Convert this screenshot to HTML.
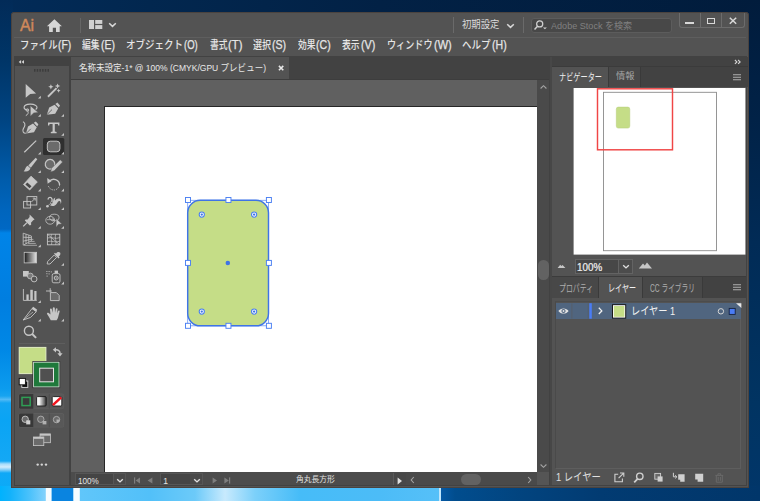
<!DOCTYPE html>
<html lang="ja">
<head>
<meta charset="utf-8">
<title>Adobe Illustrator</title>
<style>
*{margin:0;padding:0;box-sizing:border-box}
html,body{width:760px;height:501px;overflow:hidden}
body{position:relative;font-family:"Liberation Sans","Noto Sans CJK JP",sans-serif;color:#dcdcdc;font-size:12px;background:#06224f}
.abs,.abs *{position:absolute}
#desk{left:0;top:0;width:760px;height:501px}
#win{left:11.2px;top:12.2px;width:737.7px;height:475.8px;background:#535353;border-radius:3.5px 3.5px 0 0;box-shadow:inset 0 0 0 0.8px #483f3a;overflow:hidden}
.t{white-space:nowrap;line-height:1;transform-origin:0 0}
.dk{background:#424242}
.m{top:39.8px;font-size:11px;color:#e6e6e6;font-weight:500}
.ml{top:39.1px;font-size:12px;color:#e6e6e6;-webkit-text-stroke:0.25px #e6e6e6}
</style>
</head>
<body>
<!-- DESKTOP -->
<svg id="desk" class="abs" width="760" height="501" viewBox="0 0 760 501">
<defs>
<linearGradient id="gl" x1="0" y1="0" x2="0" y2="1"><stop offset="0.0000" stop-color="#022b58"/><stop offset="0.1198" stop-color="#003567"/><stop offset="0.2395" stop-color="#004482"/><stop offset="0.3593" stop-color="#005cab"/><stop offset="0.4192" stop-color="#0065bd"/><stop offset="0.4571" stop-color="#0068c4"/><stop offset="0.4651" stop-color="#0084e8"/><stop offset="0.5988" stop-color="#007ee0"/><stop offset="0.6986" stop-color="#0088e6"/><stop offset="0.7764" stop-color="#0c9cee"/><stop offset="0.7904" stop-color="#18a4f0"/><stop offset="0.7974" stop-color="#52baf5"/><stop offset="0.8044" stop-color="#12a4f2"/><stop offset="0.8383" stop-color="#0aa4f4"/><stop offset="0.9202" stop-color="#14a8f5"/><stop offset="0.9261" stop-color="#a6dcfb"/><stop offset="0.9321" stop-color="#d2ecfd"/><stop offset="0.9381" stop-color="#7cccf9"/><stop offset="0.9441" stop-color="#10a8f6"/><stop offset="1.0000" stop-color="#08acf8"/></linearGradient>
<linearGradient id="gt" x1="0" y1="0" x2="1" y2="0"><stop offset="0.0000" stop-color="#022b58"/><stop offset="0.1974" stop-color="#02274f"/><stop offset="0.5000" stop-color="#022145"/><stop offset="1.0000" stop-color="#011c3c"/></linearGradient>
<linearGradient id="gr" x1="0" y1="0" x2="0" y2="1"><stop offset="0.0000" stop-color="#011c3c"/><stop offset="0.2395" stop-color="#012247"/><stop offset="0.4850" stop-color="#012b56"/><stop offset="0.8044" stop-color="#013462"/><stop offset="1.0000" stop-color="#01366a"/></linearGradient>
<linearGradient id="gb" x1="0" y1="0" x2="1" y2="0"><stop offset="0.0000" stop-color="#00b2fe"/><stop offset="0.0132" stop-color="#12b2fb"/><stop offset="0.0395" stop-color="#4cc2fb"/><stop offset="0.0603" stop-color="#84d2fc"/><stop offset="0.1053" stop-color="#60c6fa"/><stop offset="0.1974" stop-color="#52c0f9"/><stop offset="0.2566" stop-color="#6ccaf9"/><stop offset="0.2961" stop-color="#c8eafd"/><stop offset="0.3355" stop-color="#7cd0fa"/><stop offset="0.3947" stop-color="#46bcf8"/><stop offset="0.5000" stop-color="#4cbcf7"/><stop offset="0.5774" stop-color="#56c0f8"/><stop offset="0.5776" stop-color="#c0e6fc"/><stop offset="0.5797" stop-color="#c0e6fc"/><stop offset="0.5800" stop-color="#0458a4"/><stop offset="0.5987" stop-color="#014d8e"/><stop offset="0.6842" stop-color="#02447f"/><stop offset="0.7895" stop-color="#023b72"/><stop offset="1.0000" stop-color="#01366a"/></linearGradient>
</defs>
<rect x="0" y="0" width="760" height="14" fill="url(#gt)"/>
<rect x="747" y="0" width="13" height="501" fill="url(#gr)"/>
<rect x="0" y="0" width="13" height="501" fill="url(#gl)"/>
<rect x="0" y="486" width="760" height="15" fill="url(#gb)"/>
<rect x="45.800" y="486" width="5.900" height="15" fill="#f6fcff"/>
<rect x="51.700" y="486" width="21.700" height="15" fill="#0a84e0"/>
<rect x="73.400" y="486" width="6.400" height="15" fill="#f6fcff"/>
</svg>

<!-- WINDOW -->
<div id="win" class="abs"></div>
<div id="ui" class="abs" style="left:0;top:0;width:760px;height:501px">
<!-- TITLEBAR -->
<div id="titlebar" style="left:11.2px;top:12.2px;width:737.7px;height:25.8px"></div>
<div id="ai" class="t" style="left:20.3px;top:16.6px;font-size:17.2px;color:#cf895b;-webkit-text-stroke:0.45px #cf895b;transform:scaleX(0.9218)">Ai</div>
<svg style="left:46px;top:19px" width="17" height="14" viewBox="0 0 17 14"><path d="M8.4 0.3 L15.9 7.2 H13.7 V13 H10 V8.8 H6.8 V13 H3.1 V7.2 H0.9 Z" fill="#d6d6d6"/></svg>
<div style="left:79.5px;top:18px;width:1px;height:15px;background:#666"></div>
<svg style="left:89px;top:19.8px" width="14" height="10" viewBox="0 0 14 10"><rect x="0" y="0" width="5" height="9" fill="#d0d0d0"/><rect x="6.2" y="0" width="7.1" height="3.9" fill="#d0d0d0"/><rect x="6.2" y="5.1" width="7.1" height="3.9" fill="#d0d0d0"/></svg>
<svg style="left:107.6px;top:21.6px" width="9" height="6" viewBox="0 0 9 6"><path d="M1.2 1.2 L4.5 4.4 L7.8 1.2" fill="none" stroke="#d8d8d8" stroke-width="1.5"/></svg>
<div style="left:453px;top:17px;width:1px;height:16px;background:#6a6a6a"></div>
<div id="wsname" class="t" style="left:461.5px;top:20.1px;font-size:10px;color:#dcdcdc;transform:scaleX(0.9375)">初期設定</div>
<svg style="left:506px;top:23px" width="9" height="6" viewBox="0 0 9 6"><path d="M1.2 1.2 L4.5 4.4 L7.8 1.2" fill="none" stroke="#d8d8d8" stroke-width="1.5"/></svg>
<div style="left:523px;top:17px;width:1px;height:16px;background:#6a6a6a"></div>
<div style="left:530.8px;top:18.300px;width:141.200px;height:15px;background:#484848;border:0.8px solid #5c5c5c;border-radius:3px"></div>
<svg style="left:534px;top:20px" width="14" height="12" viewBox="0 0 14 12"><circle cx="5.700" cy="3.900" r="3.050" fill="none" stroke="#d0d0d0" stroke-width="1.250"/><path d="M3.500 6.300 L0.500 9.500" stroke="#d0d0d0" stroke-width="1.500" fill="none"/><path d="M8.900 7.400 H12.900 L10.900 9.300 Z" fill="#d0d0d0"/></svg>
<div id="stock" class="t" style="left:550.5px;top:21.4px;font-size:9.4px;color:#808080;transform:scaleX(0.9679)">Adobe Stock を検索</div>
<div style="left:678.6px;top:12.6px;width:66px;height:15px;border:1px solid #6c6c6c;border-top:none;border-radius:0 0 3px 3px"></div>
<div style="left:700.2px;top:12.6px;width:1px;height:14.4px;background:#6c6c6c"></div>
<div style="left:721.2px;top:12.6px;width:1px;height:14.4px;background:#6c6c6c"></div>
<div style="left:685.4px;top:22px;width:8.2px;height:1.8px;background:#d8d8d8"></div>
<div style="left:707px;top:18px;width:8.2px;height:6.2px;border:1.4px solid #d8d8d8;border-top-width:1.8px"></div>
<svg style="left:728px;top:16px" width="10" height="9" viewBox="0 0 10 9"><path d="M1.800 1.800 L8.2 7.800 M8.2 1.8 L1.8 7.8" stroke="#d8d8d8" stroke-width="1.5" fill="none"/></svg>
<div style="left:14px;top:37px;width:732px;height:1px;background:#5e5e5e"></div>
<!-- MENUBAR -->
<div id="menubar" style="left:11.2px;top:38px;width:737.7px;height:18px"></div>
<div class="t m" id="m1a" style="left:19.5px;transform:scaleX(0.8523)">ファイル</div><div class="t ml" id="m1b" style="left:58.3px;transform:scaleX(0.8579)">(F)</div>
<div class="t m" id="m2a" style="left:82px;transform:scaleX(0.7955)">編集</div><div class="t ml" id="m2b" style="left:100.8px;transform:scaleX(0.8688)">(E)</div>
<div class="t m" id="m3a" style="left:125.5px;transform:scaleX(0.8636)">オブジェクト</div><div class="t ml" id="m3b" style="left:184.05px;transform:scaleX(0.7877)">(O)</div>
<div class="t m" id="m4a" style="left:209.5px;transform:scaleX(0.7955)">書式</div><div class="t ml" id="m4b" style="left:228.3px;transform:scaleX(0.9394)">(T)</div>
<div class="t m" id="m5a" style="left:253.25px;transform:scaleX(0.8182)">選択</div><div class="t ml" id="m5b" style="left:272.3px;transform:scaleX(0.8844)">(S)</div>
<div class="t m" id="m6a" style="left:297.5px;transform:scaleX(0.7955)">効果</div><div class="t ml" id="m6b" style="left:316.3px;transform:scaleX(0.8787)">(C)</div>
<div class="t m" id="m7a" style="left:342px;transform:scaleX(0.7955)">表示</div><div class="t ml" id="m7b" style="left:360.8px;transform:scaleX(0.9000)">(V)</div>
<div class="t m" id="m8a" style="left:387px;transform:scaleX(0.8273)">ウィンドウ</div><div class="t ml" id="m8b" style="left:433.8px;transform:scaleX(0.9132)">(W)</div>
<div class="t m" id="m9a" style="left:462px;transform:scaleX(0.8636)">ヘルプ</div><div class="t ml" id="m9b" style="left:491.8px;transform:scaleX(0.8787)">(H)</div>
<!-- FRAME LINES -->
<div style="left:14.1px;top:56.2px;width:732.5px;height:429.8px;background:#424242"></div>
<!-- TOOLBAR -->
<div id="tools" style="left:14.9px;top:57px;width:53.9px;height:427.8px;background:#535353"></div>
<div class="dk" style="left:14.9px;top:57px;width:53.9px;height:9.4px"></div>
<!--TOOLSVG-->
<svg id="toolsvg" style="left:14px;top:57px" width="55" height="428" viewBox="14 57 55 428">
<g fill="#c6c6c6" stroke="none">
<!-- collapse arrows -->
<path d="M21.100 60.100 V63.700 L18.700 61.900 Z M24 60.100 V63.700 L21.600 61.900 Z" fill="#d4d4d4"/>
<!-- gripper -->
<g fill="#3c3c3c"><rect x="34.0" y="69" width="1.5" height="2.700"/><rect x="36.7" y="69" width="1.5" height="2.700"/><rect x="39.4" y="69" width="1.5" height="2.700"/><rect x="42.1" y="69" width="1.5" height="2.700"/><rect x="44.8" y="69" width="1.5" height="2.700"/><rect x="47.5" y="69" width="1.5" height="2.700"/></g>
<!-- flyout triangles -->
<g id="fly">
<path d="M40.8 95.8 V98.6 H38 Z"/>
<path d="M40.8 114 V116.8 H38 Z"/><path d="M64 114 V116.8 H61.2 Z"/>
<path d="M64 133 V135.8 H61.2 Z"/>
<path d="M40.8 151.8 V154.6 H38 Z"/><path d="M64 151.8 V154.6 H61.2 Z"/>
<path d="M40.8 170.2 V173 H38 Z"/><path d="M64 170.2 V173 H61.2 Z"/>
<path d="M40.8 188.6 V191.4 H38 Z"/><path d="M64 188.6 V191.4 H61.2 Z"/>
<path d="M40.8 207.3 V210.1 H38 Z"/><path d="M64 207.3 V210.1 H61.2 Z"/>
<path d="M40.8 225.9 V228.7 H38 Z"/><path d="M64 225.9 V228.7 H61.2 Z"/>
<path d="M40.8 244.5 V247.3 H38 Z"/>
<path d="M64 263 V265.8 H61.2 Z"/>
<path d="M64 281.6 V284.4 H61.2 Z"/>
<path d="M40.8 300.2 V303 H38 Z"/>
<path d="M40.8 318.8 V321.6 H38 Z"/><path d="M64 318.8 V321.6 H61.2 Z"/>
</g>
<!-- R1 selection -->
<path d="M25.7 83.9 L36.1 93.5 L30.2 93.9 L25.7 97.8 Z"/>
<!-- magic wand -->
<path d="M47.300 96.100 L55.900 87.500 L57.200 88.800 L48.600 97.400 Z"/>
<path d="M50.900 84.200 L51.700 86.100 L53.600 86.800 L51.700 87.500 L50.900 89.400 L50.100 87.500 L48.200 86.800 L50.100 86.100 Z"/>
<path d="M57.600 83.400 L58.400 85.300 L60.300 86 L58.400 86.700 L57.600 88.600 L56.800 86.700 L54.900 86 L56.800 85.300 Z"/>
<path d="M58.600 88.700 L59.200 90.100 L60.600 90.700 L59.200 91.300 L58.600 92.700 L58 91.300 L56.600 90.700 L58 90.100 Z"/>
<!-- R2 lasso+arrow -->
<path d="M28.4 110.3 C25.6 110 23.900 108.800 24.1 107.2 C24.400 105.200 27.2 104 30.6 104.1 C34.400 104.200 37.2 105.600 37 107.600 C36.900 108.400 36.400 109 35.600 109.500" fill="none" stroke="#c6c6c6" stroke-width="1.15"/>
<circle cx="27.4" cy="110.100" r="1.300" fill="none" stroke="#c6c6c6" stroke-width="0.9"/>
<path d="M27.900 111.300 C28.600 112.800 28 114.600 25.800 115.600" fill="none" stroke="#c6c6c6" stroke-width="1"/>
<path d="M30.300 105.700 L38.300 112.500 L33.800 112.900 L30.300 116.200 Z" stroke="#535353" stroke-width="0.5"/>
<!-- pen -->
<path d="M46.8 114.8 L49.2 107.6 L54.6 104.8 L58.2 108.6 L55.2 113.8 Z"/>
<path d="M55.4 103.9 L57.4 102.6 L60 105.4 L58.8 107.6 Z"/>
<path d="M46.9 114.7 L52 109.6" stroke="#535353" stroke-width="0.8" fill="none"/>
<!-- R3 curvature pen -->
<path d="M23 121.6 C26.4 123.6 24.6 126.6 23.4 128.6 C22 131 23.4 133.6 26.2 133.2" fill="none" stroke="#c6c6c6" stroke-width="1.1"/>
<path d="M26 133.6 L28 126.6 L33 123.6 L36.8 127.2 L34 132.2 Z"/>
<path d="M33.8 122.8 L35.8 121.4 L38.4 124.2 L37.2 126.4 Z"/>
<path d="M26.1 133.5 L30.8 128.8" stroke="#535353" stroke-width="0.8" fill="none"/>
<!-- T -->
<path d="M48 122.4 H59.4 V125.6 H58.2 L57.8 123.9 H54.8 V131.6 L56.6 132 V133.2 H50.8 V132 L52.6 131.6 V123.9 H49.6 L49.2 125.6 H48 Z"/>
<!-- R4 line -->
<path d="M24.3 152.2 L36.2 140.6" stroke="#c6c6c6" stroke-width="1.2" fill="none"/>
<!-- rounded rect selected -->
<rect x="43" y="138" width="21.3" height="17" rx="1.5" fill="#2f2f2f"/>
<rect x="47.3" y="141.2" width="12.6" height="10.6" rx="3" fill="#6b6b6b" stroke="#cfcfcf" stroke-width="0.9"/>
<path d="M64 151.8 V154.6 H61.2 Z"/>
<!-- R5 brush -->
<path d="M35.700 157.800 L37.300 159.300 L30.800 167.700 L28.300 165.500 Z"/>
<path d="M27.700 165.800 L30.400 168.300 C30 170.600 27.200 172 23.600 171.200 C25.600 170.200 25 167 27.700 165.800 Z"/>
<!-- shaper -->
<path d="M52.600 168.300 A4.800 4.800 0 1 1 54.600 165.700" fill="#6b6b6b" stroke="#c6c6c6" stroke-width="1.25"/>
<path d="M50.700 171.900 L51.500 168.200 L60.200 159.700 L62.600 162 L54.200 170.800 Z" stroke="#535353" stroke-width="0.5"/>
<!-- R6 eraser -->
<path d="M31 176.200 L37.300 181.900 L29.700 190 L23.500 184.500 Z" stroke="#c6c6c6" stroke-width="0.8" stroke-linejoin="round"/>
<path d="M25.400 184.500 L27.300 182.400 L31.500 186.200 L29.600 188.300 Z" fill="#484848"/>
<!-- rotate -->
<path d="M49.200 181.600 A5.800 5.800 0 0 1 59.600 185" fill="none" stroke="#c6c6c6" stroke-width="1.4"/>
<path d="M59.600 185 A5.800 5.800 0 0 1 48.200 185.400" fill="none" stroke="#c6c6c6" stroke-width="0.9" stroke-dasharray="1.3 1"/>
<path d="M47.200 178 L51.700 181 L47.600 183.800 Z"/>
<!-- R7 scale -->
<rect x="23.6" y="201.4" width="7" height="6.6" fill="none" stroke="#c6c6c6" stroke-width="0.9"/>
<rect x="27" y="196.6" width="9.8" height="8.4" fill="none" stroke="#c6c6c6" stroke-width="0.9"/>
<path d="M31.4 202 L35 198.4 M32.8 198.2 H35.2 V200.6" fill="none" stroke="#c6c6c6" stroke-width="0.9"/>
<!-- width tool -->
<path d="M48.200 199.700 C47.800 197.800 49.500 196.800 50.900 197.600 C52.400 198.600 52.300 200.600 51.800 202.300" fill="none" stroke="#c6c6c6" stroke-width="1.200"/>
<path d="M50 205.300 C52 206.600 55.200 206.100 56.700 203.700 C57.700 202.100 58.600 200.700 59.600 201.100 C60.600 201.500 60.800 202.900 60.600 204.300 C61.900 202 61.500 199.300 59.400 198.600 C57.700 198 56.300 199 55.300 200.400 C54.400 198.900 55 198.100 55.900 197.800 C54.400 197.500 53.400 198.800 53.200 200.400 C53 202.100 52.300 203.500 50 205.300 Z"/>
<circle cx="47.400" cy="206.200" r="1.300"/><circle cx="51.700" cy="202.500" r="1.100" fill="#535353" stroke="#c6c6c6" stroke-width="0.600"/>
<path d="M47.400 206.200 L51 203.100" stroke="#c6c6c6" stroke-width="0.600" fill="none"/>
<!-- R8 pin -->
<path d="M29.600 214.600 L34.600 219.400 L33.200 220.200 L31 222.800 L31.200 224.800 L29.800 225.400 L24.800 220.600 L25.600 219.400 L27.600 219.400 L29.600 217 Z"/>
<path d="M27 222.600 L23.200 226.400" stroke="#c6c6c6" stroke-width="1.300" fill="none"/>
<!-- shape builder -->
<ellipse cx="50.200" cy="220.300" rx="4.400" ry="3.900" fill="none" stroke="#c6c6c6" stroke-width="0.800"/>
<ellipse cx="54.300" cy="217.500" rx="4.700" ry="3.300" fill="none" stroke="#c6c6c6" stroke-width="0.800"/>
<path d="M47 219.700 H54 M52.400 218.300 L54.400 219.700 L52.400 221.100" fill="none" stroke="#c6c6c6" stroke-width="0.700"/>
<path d="M56.200 218.600 L61.800 224 L58.400 224.300 L56.200 227.300 Z" stroke="#535353" stroke-width="0.400"/>
<!-- R9 perspective grid -->
<path d="M23.2 233.2 L31.4 236 V240.8 L23.2 245.2 Z M23.2 237.2 L31.4 237.6 M23.2 241.2 L31.4 239.2 M26 234.2 V243.8 M28.8 235.2 V242.2" fill="none" stroke="#c6c6c6" stroke-width="0.8"/>
<path d="M31.4 239.4 H33.4 M30.6 241.4 H34.6 M28 243.4 H35.8 M24 245.3 H37" fill="none" stroke="#c6c6c6" stroke-width="0.7"/>
<!-- mesh -->
<rect x="47.4" y="234.2" width="12.4" height="10.6" fill="none" stroke="#c6c6c6" stroke-width="0.9"/>
<path d="M47.4 238 C51 236.6 56 239.6 59.8 237.6 M47.4 241.6 C51 240.2 56 243.2 59.8 241.2 M51.4 234.2 C50 238 53 241 51.4 244.8 M55.6 234.2 C54.2 238 57.2 241 55.6 244.8 M47.4 234.2 L59.8 244.8" fill="none" stroke="#c6c6c6" stroke-width="0.7"/>
<!-- R10 gradient -->
<linearGradient id="gg" x1="0" y1="0" x2="1" y2="0"><stop offset="0" stop-color="#1a1a1a"/><stop offset="1" stop-color="#e6e6e6"/></linearGradient>
<rect x="24.2" y="252.3" width="12.4" height="10.6" fill="url(#gg)" stroke="#c6c6c6" stroke-width="0.8"/>
<!-- eyedropper -->
<path d="M47.2 264 L47.6 261.6 L54.2 255 L56.6 257.4 L50 264 Z" fill="none" stroke="#c6c6c6" stroke-width="0.9"/>
<path d="M54 253.8 L55 252.8 L56 253.8 C56.6 252 59 251.4 60 252.6 C61 253.8 60 255.8 58.6 256.4 L59.6 257.4 L58.6 258.4 Z"/>
<!-- R11 blend -->
<rect x="23" y="271" width="5.8" height="5.6"/>
<circle cx="30.3" cy="276" r="2.9" fill="#7a7a7a" stroke="#c6c6c6" stroke-width="0.8"/>
<circle cx="34.1" cy="279" r="2.9" fill="#535353" stroke="#c6c6c6" stroke-width="0.9"/>
<!-- symbol sprayer -->
<rect x="52.2" y="273.6" width="7.8" height="9.2" rx="1.6" fill="none" stroke="#c6c6c6" stroke-width="0.9"/>
<rect x="54.6" y="270.6" width="3.4" height="2.6"/>
<circle cx="56.2" cy="278" r="2" fill="none" stroke="#c6c6c6" stroke-width="1"/><circle cx="56.2" cy="278" r="0.7"/>
<g><rect x="46.4" y="271" width="1" height="1"/><rect x="48.6" y="271" width="1" height="1"/><rect x="50.8" y="271.4" width="1" height="1"/><rect x="46.4" y="273.2" width="1" height="1"/><rect x="48.6" y="273.4" width="1" height="1"/><rect x="46.6" y="275.6" width="1" height="1"/></g>
<!-- R12 graph -->
<path d="M23.4 289 V300.4 H36.8" fill="none" stroke="#c6c6c6" stroke-width="0.9"/>
<rect x="26.4" y="294.4" width="2.3" height="5.6"/><rect x="30.3" y="289.8" width="2.5" height="10.2"/><rect x="34.3" y="291" width="2.2" height="9"/>
<!-- artboard tool -->
<path d="M50.2 288.2 V292.6 M46 291 H51.8" fill="none" stroke="#c6c6c6" stroke-width="0.9"/>
<path d="M50.4 292.6 H56.4 L59.2 295.4 V300.6 H50.4 Z" fill="#6b6b6b" stroke="#c6c6c6" stroke-width="0.9"/>
<!-- R13 slice -->
<path d="M23.2 320 L32 308.6 L36.4 311.6 L30.6 317.4 Z" fill="none" stroke="#c6c6c6" stroke-width="0.9"/>
<path d="M31.6 308.4 L33.2 306.8 L37.2 309.8 L36.2 311.8 Z"/>
<path d="M23.2 320 L33 312" stroke="#c6c6c6" stroke-width="0.7" fill="none"/>
<!-- hand -->
<path d="M50.800 320.200 C49.800 318.400 49 316.600 47.200 314.200 C46.500 313.100 47.700 312.200 48.700 312.900 L50.500 314.500 L50 309.700 C50 308.400 51.700 308.200 51.900 309.500 L52.600 312.800 L52.800 308.300 C52.900 307 54.700 307 54.800 308.300 L55 312.800 L55.800 308.900 C56.100 307.700 57.700 308 57.500 309.300 L57 313.400 L58 311.100 C58.500 310 60 310.500 59.600 311.800 L58.300 316.600 C57.900 318.400 57.300 319.500 56.600 320.200 Z"/>
<!-- R14 zoom -->
<circle cx="28.900" cy="330.700" r="4.500" fill="none" stroke="#c6c6c6" stroke-width="1.400"/>
<path d="M32.200 334 L36.100 337.900" stroke="#c6c6c6" stroke-width="2" fill="none"/>
<!-- separator -->
<rect x="19" y="343" width="46" height="0.8" fill="#626262"/>
<!-- fill / stroke -->
<rect x="18.7" y="346.9" width="27.7" height="27.2" fill="#dfe9c6"/>
<rect x="19.6" y="347.8" width="25.9" height="25.4" fill="#c5dd87"/>
<rect x="32.4" y="361" width="27.8" height="27.1" fill="#333"/>
<rect x="33.2" y="361.8" width="26.2" height="25.5" fill="#d9e6dc"/>
<rect x="34" y="362.6" width="24.6" height="23.9" fill="#1f793b"/>
<rect x="39.2" y="367.7" width="14.8" height="14.6" fill="#e6e6e6"/>
<rect x="40.2" y="368.7" width="12.8" height="12.6" fill="#505050"/>
<!-- swap -->
<path d="M55.400 349.800 C58.600 349.600 60.200 351.400 60 353.800" fill="none" stroke="#c6c6c6" stroke-width="1.500"/>
<path d="M56 347.200 V352.400 L52.800 349.800 Z M57.400 353.200 H62.600 L60 356.400 Z"/>
<!-- default -->
<rect x="21.8" y="381" width="6" height="6.4" fill="#111" stroke="#e0e0e0" stroke-width="0.9"/>
<rect x="19.2" y="378.4" width="6.2" height="6.4" fill="#fff" stroke="#111" stroke-width="0.9"/>
<!-- color mode group -->
<rect x="19" y="394" width="44.7" height="14.7" rx="1.5" fill="#585858" stroke="#606060" stroke-width="0.8"/>
<path d="M20.5 394 H33 V408.7 H20.5 A1.5 1.5 0 0 1 19 407.2 V395.5 A1.5 1.5 0 0 1 20.500 394 Z" fill="#383838"/>
<path d="M49.3 394 V408.7 M33.400 394 V408.700" stroke="#4c4c4c" stroke-width="0.8"/>
<rect x="22" y="397.4" width="8.2" height="8.2" fill="#3a3a3a" stroke="#2f9e55" stroke-width="1.5"/>
<linearGradient id="gg2" x1="0" y1="0" x2="1" y2="0"><stop offset="0" stop-color="#fff"/><stop offset="0.3" stop-color="#f0f0f0"/><stop offset="1" stop-color="#333"/></linearGradient>
<rect x="36.6" y="396.6" width="9.6" height="9.4" rx="1" fill="url(#gg2)" stroke="#1a1a1a" stroke-width="0.9"/>
<rect x="52.2" y="396.6" width="9.6" height="9.4" rx="1" fill="#fff" stroke="#1a1a1a" stroke-width="0.9"/>
<path d="M52.8 405.2 L61.2 397.4" stroke="#f0141e" stroke-width="2.5" fill="none"/>
<!-- draw mode group -->
<rect x="19" y="413.5" width="44.7" height="13.6" rx="1.5" fill="#585858" stroke="#606060" stroke-width="0.8"/>
<path d="M20.5 413.500 H33 V427.1 H20.5 A1.5 1.5 0 0 1 19 425.6 V415 A1.5 1.5 0 0 1 20.5 413.5 Z" fill="#383838"/>
<path d="M49.3 413.5 V427.1 M33.400 413.500 V427.100" stroke="#4c4c4c" stroke-width="0.8"/>
<circle cx="25.2" cy="419.3" r="3.2" fill="#6b6b6b" stroke="#c6c6c6" stroke-width="0.9"/>
<rect x="26.2" y="420.3" width="4.1" height="4.1" fill="#d0d0d0"/>
<circle cx="40.8" cy="419.3" r="3.2" fill="#6b6b6b" stroke="#b0b0b0" stroke-width="0.9"/>
<rect x="42.6" y="421" width="3.8" height="3.4" fill="#b0b0b0"/>
<circle cx="56.5" cy="419.6" r="3.2" fill="#6b6b6b" stroke="#b0b0b0" stroke-width="0.9"/>
<path d="M56.5 419.600 H59.7 A3.2 3.2 0 0 1 56.5 422.8 Z" fill="#b0b0b0"/>
<!-- screen mode -->
<rect x="40" y="433.9" width="10.4" height="8.8" fill="#6b6b6b" stroke="#c6c6c6" stroke-width="0.8"/>
<rect x="40" y="433.900" width="10.4" height="1.8" fill="#c6c6c6"/>
<rect x="33.4" y="437" width="10.4" height="8.6" fill="#6b6b6b" stroke="#c6c6c6" stroke-width="0.8"/>
<rect x="33.4" y="437.000" width="10.400" height="1.800" fill="#c6c6c6"/>
<!-- dots -->
<circle cx="37.7" cy="464.6" r="1.2" fill="#d6d6d6"/><circle cx="41.8" cy="464.6" r="1.2" fill="#d6d6d6"/><circle cx="46" cy="464.6" r="1.2" fill="#d6d6d6"/>
</g>
</svg>
<!--/TOOLSVG-->
<!-- DOC AREA -->
<div class="dk" style="left:71.3px;top:57px;width:477.7px;height:22px"></div>
<div style="left:71.3px;top:57px;width:217.7px;height:22px;background:#535353"></div>
<div class="t" id="doctab" style="left:79px;top:63.2px;font-size:9.6px;color:#e8e8e8;transform:scaleX(0.8875)">名称未設定-1* @ 100% (CMYK/GPU プレビュー)</div>
<svg style="left:277.400px;top:64.100px" width="8" height="8" viewBox="0 0 8 8"><path d="M1.900 1.900 L6.300 6.300 M6.300 1.900 L1.900 6.300" stroke="#e8e8e8" stroke-width="1.550" fill="none"/></svg>
<div style="left:71.3px;top:79px;width:477.7px;height:1px;background:#3d3d3d"></div>
<div id="canvas" style="left:71.3px;top:80px;width:465.7px;height:392.3px;background:#606060"></div>
<div id="artboard" style="left:104.4px;top:105.9px;width:432.600px;height:366.4px;background:#fff;border-left:0.9px solid #262626;border-top:0.9px solid #262626"></div>
<!-- selected shape -->
<svg style="left:180px;top:192px" width="100" height="142" viewBox="180 192 100 142">
<rect x="187.700" y="200.300" width="80.800" height="125.500" fill="none" stroke="#6c98f6" stroke-width="0.800"/>
<rect x="187.700" y="200.300" width="80.800" height="125.500" rx="12.500" fill="#c5dd87" stroke="#3f74e6" stroke-width="1.450"/>
<g fill="#fff" stroke="#4a7ff2" stroke-width="0.950"><rect x="185.50" y="197.50" width="5.0" height="5.0"/><rect x="225.95" y="197.50" width="5.0" height="5.0"/><rect x="266.40" y="197.50" width="5.0" height="5.0"/><rect x="185.50" y="260.40" width="5.0" height="5.0"/><rect x="266.40" y="260.40" width="5.0" height="5.0"/><rect x="185.50" y="323.30" width="5.0" height="5.0"/><rect x="225.95" y="323.30" width="5.0" height="5.0"/><rect x="266.40" y="323.30" width="5.0" height="5.0"/></g>
<g fill="#f4f8ff" stroke="#4a7ff2" stroke-width="1.050"><circle cx="201.8" cy="214.6" r="2.600"/><circle cx="254.1" cy="214.6" r="2.600"/><circle cx="201.8" cy="311.6" r="2.600"/><circle cx="254.1" cy="311.6" r="2.600"/></g>
<g fill="#3f74e6"><circle cx="201.8" cy="214.6" r="1.150"/><circle cx="254.1" cy="214.6" r="1.150"/><circle cx="201.8" cy="311.6" r="1.150"/><circle cx="254.1" cy="311.6" r="1.150"/><circle cx="227.800" cy="262.900" r="2.250"/></g>
</svg>
<!-- v scrollbar -->
<div style="left:537px;top:80px;width:12px;height:392.300px;background:#4a4a4a"></div>
<svg style="left:538.600px;top:83.800px" width="9" height="6" viewBox="0 0 9 6"><path d="M1.600 4.500 L4.500 1.700 L7.400 4.500" fill="none" stroke="#a4a4a4" stroke-width="1.100"/></svg>
<svg style="left:539px;top:462.600px" width="9" height="6" viewBox="0 0 9 6"><path d="M1.600 1.500 L4.500 4.300 L7.400 1.500" fill="none" stroke="#a4a4a4" stroke-width="1.100"/></svg>
<div style="left:538.2px;top:260px;width:10.4px;height:19.8px;border-radius:5.2px;background:#626262"></div>
<!-- status bar -->
<div style="left:71.3px;top:472.3px;width:477.7px;height:12.7px;background:#4c4c4c"></div>
<div style="left:74.5px;top:473.3px;width:39px;height:11.4px;background:#454545;border:1px solid #565656"></div>
<div class="t" id="z1" style="left:77.5px;top:476.6px;font-size:8.5px;color:#e6e6e6;transform:scaleX(0.9563)">100%</div>
<div style="left:113.5px;top:473.3px;width:12.5px;height:11.4px;background:#4a4a4a;border:1px solid #565656;border-left:none"></div>
<svg style="left:116.000px;top:478px" width="8" height="6" viewBox="0 0 8 6"><path d="M1.2 1.2 L4 3.9 L6.8 1.2" fill="none" stroke="#e0e0e0" stroke-width="1.4"/></svg>
<svg style="left:132px;top:476px" width="100" height="9" viewBox="132 476 100 9" fill="#7e7e7e"><rect x="134" y="477.400" width="1.2" height="6.2"/><path d="M140 477.4 V483.6 L135.600 480.5 Z"/><path d="M152.4 477.40 V483.60 L147.6 480.5 Z"/><path d="M212.6 477.4 V483.6 L217 480.5 Z"/><path d="M224.4 477.4 V483.6 L228.800 480.5 Z"/><rect x="229" y="477.4" width="1.2" height="6.200"/></svg>
<div style="left:159.5px;top:473.3px;width:31px;height:11.4px;background:#454545;border:1px solid #565656"></div>
<div class="t" id="pg1" style="left:163.2px;top:476.6px;font-size:8.5px;color:#e6e6e6">1</div>
<div style="left:190px;top:473.3px;width:13px;height:11.4px;background:#4a4a4a;border:1px solid #565656;border-left:none"></div>
<svg style="left:193.2px;top:478px" width="8" height="6" viewBox="0 0 8 6"><path d="M1.2 1.2 L4 3.9 L6.8 1.2" fill="none" stroke="#e0e0e0" stroke-width="1.4"/></svg>
<div class="t" id="stat" style="left:295.5px;top:476.2px;font-size:8.2px;color:#e0e0e0;transform:scaleX(0.9474)">角丸長方形</div>
<div style="left:393px;top:473.3px;width:13.3px;height:11.4px;background:#484848;border-left:1px solid #5a5a5a"></div>
<svg style="left:397px;top:476.6px" width="6" height="8" viewBox="0 0 6 8"><path d="M0.600 0.6 V7.4 L5 4 Z" fill="#e0e0e0"/></svg>
<div style="left:406.3px;top:472.3px;width:130.7px;height:12.7px;background:#4a4a4a"></div>
<svg style="left:410.200px;top:475.800px" width="5" height="8" viewBox="0 0 5 8"><path d="M3.8 1 L1.200 4 L3.8 7" fill="none" stroke="#a4a4a4" stroke-width="1.1"/></svg>
<svg style="left:527.300px;top:475.800px" width="5" height="8" viewBox="0 0 5 8"><path d="M1.2 1 L3.8 4 L1.2 7" fill="none" stroke="#a4a4a4" stroke-width="1.1"/></svg>
<div style="left:461.2px;top:473.8px;width:19.6px;height:10.8px;border-radius:5.4px;background:#626262"></div>
<div style="left:537px;top:472.3px;width:12px;height:12.7px;background:#555"></div>
<!-- RIGHT DOCK -->
<div style="left:550.3px;top:57.2px;width:2px;height:428px;background:#474747"></div><div style="left:552.2px;top:57.2px;width:193.4px;height:427.6px;background:#535353"></div>
<div class="dk" style="left:552.2px;top:57.2px;width:196.200px;height:30.1px"></div><div style="left:552.2px;top:66.300px;width:196.200px;height:0.800px;background:#3b3b3b"></div>
<svg style="left:734.400px;top:58.800px" width="8" height="6" viewBox="0 0 8 6"><path d="M0.900 1 L2.900 2.900 L0.900 4.800 M4.100 1 L6.100 2.900 L4.100 4.800" fill="none" stroke="#d4d4d4" stroke-width="1.150"/></svg>
<div style="left:552.2px;top:66.7px;width:55.8px;height:21px;background:#535353"></div>
<div style="left:608px;top:66.7px;width:32.6px;height:20.6px;background:#484848;border-right:1px solid #3a3a3a;border-left:1px solid #3a3a3a"></div>
<div class="t" id="nav1" style="left:559.3px;top:71.6px;font-size:10.5px;color:#ededed;transform:scaleX(0.6825)">ナビゲーター</div>
<div class="t" id="nav2" style="left:616px;top:72.2px;font-size:9.3px;color:#a6a6a6;transform:scaleX(0.9887)">情報</div>
<svg style="left:733px;top:74px" width="9" height="7" viewBox="0 0 9 7"><path d="M0 0.700 H8 M0 3.200 H8 M0 5.700 H8" stroke="#b0b0b0" stroke-width="1.050"/></svg>
<!-- navigator preview -->
<svg style="left:573px;top:87px" width="173" height="168" viewBox="573 87 173 168">
<rect x="573.600" y="88" width="171.800" height="166.600" fill="#fff"/>
<rect x="603.5" y="92.3" width="113" height="158.4" fill="none" stroke="#8a8a8a" stroke-width="0.9"/>
<rect x="616.3" y="107.1" width="13.5" height="21" rx="2" fill="#c5dd87" stroke="#b4cc78" stroke-width="0.5"/>
<rect x="597.500" y="88.800" width="75" height="61" fill="none" stroke="#f04646" stroke-width="1.450"/>
</svg>
<!-- zoom row -->
<svg style="left:556px;top:262px" width="12" height="8" viewBox="0 0 12 8"><path d="M1.600 6 L4.2 2.800 L5.4 4 L6.6 3 L9.4 6 Z" fill="#c6c6c6"/></svg>
<div style="left:574.7px;top:258.9px;width:44.3px;height:15.2px;background:#474747;border:1px solid #636363"></div>
<div class="t" id="z2" style="left:577.2px;top:263.1px;font-size:10.4px;color:#f0f0f0;-webkit-text-stroke:0.2px #f0f0f0;transform:scaleX(0.9481)">100%</div>
<div style="left:619px;top:258.9px;width:14.2px;height:15.2px;background:#4c4c4c;border:1px solid #636363;border-left:none"></div>
<svg style="left:622px;top:264.2px" width="8" height="6" viewBox="0 0 8 6"><path d="M1.2 1.2 L4 3.900 L6.8 1.2" fill="none" stroke="#e0e0e0" stroke-width="1.4"/></svg>
<svg style="left:638px;top:261px" width="15" height="9" viewBox="0 0 15 9"><path d="M0.8 7.6 L5 2.400 L6.8 4.4 L9 1.600 L14 7.6 Z" fill="#c6c6c6"/></svg>
<!-- second group tabs -->
<div style="left:552.2px;top:275.6px;width:193.4px;height:1.4px;background:#3c3c3c"></div>
<div class="dk" style="left:552.2px;top:277px;width:193.4px;height:20.6px"></div>
<div style="left:552.2px;top:277px;width:47.1px;height:20.6px;background:#484848;border-right:1px solid #3a3a3a"></div>
<div style="left:599.3px;top:277px;width:42.9px;height:21px;background:#535353"></div>
<div style="left:642.2px;top:277px;width:61.1px;height:20.6px;background:#484848;border-right:1px solid #3a3a3a;border-left:1px solid #3a3a3a"></div>
<div class="t" id="tb1" style="left:558.5px;top:282.9px;font-size:10.5px;color:#adadad;transform:scaleX(0.6593)">プロパティ</div>
<div class="t" id="tb2" style="left:608px;top:282.9px;font-size:10.5px;color:#f2f2f2;transform:scaleX(0.6717)">レイヤー</div>
<div class="t" id="tb3" style="left:650px;top:282.9px;font-size:10.5px;color:#adadad;transform:scaleX(0.6346)">CC ライブラリ</div>
<svg style="left:733px;top:284.4px" width="9" height="7" viewBox="0 0 9 7"><path d="M0 0.700 H8 M0 3.200 H8 M0 5.700 H8" stroke="#b0b0b0" stroke-width="1.050"/></svg>
<!-- layers list -->
<div style="left:555.4px;top:300.6px;width:185.6px;height:168.6px;border:1px solid #5e5e5e;border-top:1px solid #4c4c4c;border-left:1px solid #4a4a4a"></div>
<div style="left:556.1px;top:303.2px;width:185.3px;height:15.5px;background:#50657f"></div>
<svg style="left:555px;top:303px" width="187" height="17" viewBox="555 303 187 17">
<path d="M558.4 311 C560.4 307.600 566.600 307.6 568.6 311 C566.6 314.4 560.4 314.4 558.400 311 Z" fill="#e4e4e4"/><circle cx="563.5" cy="311" r="2.1" fill="#50657f"/><circle cx="563.5" cy="311.0" r="1" fill="#e4e4e4"/>
<path d="M571.900 303.200 V318.700 M588.300 303.200 V318.700" stroke="#55606e" stroke-width="1.200"/>
<rect x="589.300" y="303.200" width="2.500" height="15.500" fill="#4a7cf5"/>
<path d="M598.8 307.800 L601.8 310.9 L598.8 314" fill="none" stroke="#f0f0f0" stroke-width="1.3"/>
<rect x="612" y="304.200" width="14.2" height="14.4" fill="#1a1a1a"/><rect x="613" y="305.2" width="12.2" height="12.4" fill="#fff"/><rect x="613.8" y="306" width="10.6" height="10.800" fill="#c5dd87"/>
<circle cx="720.9" cy="311.3" r="2.7" fill="none" stroke="#d6d6d6" stroke-width="1"/>
<rect x="729.2" y="308.400" width="6" height="6" fill="#4a7cf5" stroke="#16233c" stroke-width="0.9"/>
<path d="M736 303.200 H741.400 V308 Z" fill="#e8e8e8"/>
</svg>
<div class="t" id="ly1" style="left:630.9px;top:306.2px;font-size:11px;color:#f2f2f2;transform:scaleX(0.8345)">レイヤー 1</div>
<!-- layers footer -->
<div class="t" id="ly2" style="left:555.7px;top:472.2px;font-size:11px;color:#e0e0e0;transform:scaleX(0.8478)">1 レイヤー</div>
<svg id="lyicons" style="left:610px;top:470px" width="116" height="15" viewBox="610 470 116 15">
<g fill="none" stroke="#d0d0d0" stroke-width="1.1">
<path d="M618.200 474.200 H614.900 V481.800 H622.400 V478.600"/><path d="M618.600 478.200 L623.400 473.400 M620 473 H623.800 V476.800"/>
<circle cx="639.800" cy="476.300" r="3.200" stroke-width="1.400"/><path d="M637.600 478.800 L634.200 482.400" stroke-width="1.700"/>
</g>
<g fill="#d0d0d0">
<rect x="654.800" y="473.400" width="5.800" height="5.800" fill="#6a6a6a" stroke="#d0d0d0" stroke-width="0.900"/><rect x="657.600" y="476.400" width="5" height="5.200"/>
<path d="M678.200 474.200 H684.600 V481.800 H680.200 V479.800 H678.200 Z"/><path d="M673.400 472.800 V476.800 H676.600 M675.200 475.200 L676.900 476.800 L675.200 478.400" fill="none" stroke="#d0d0d0" stroke-width="1"/>
<path d="M695.200 473.800 H703.200 V481.800 H697.600 V479.400 H695.200 Z"/>
</g>
<g fill="none" stroke="#6c6c6c" stroke-width="0.9"><path d="M715.400 475.400 H723.200 M716.300 475.400 V482.200 H722.300 V475.400 M717.900 475.200 V473.800 H720.700 V475.200 M718.200 477 V480.800 M720.400 477 V480.800"/></g>
</svg>
</div>
</body>
</html>
